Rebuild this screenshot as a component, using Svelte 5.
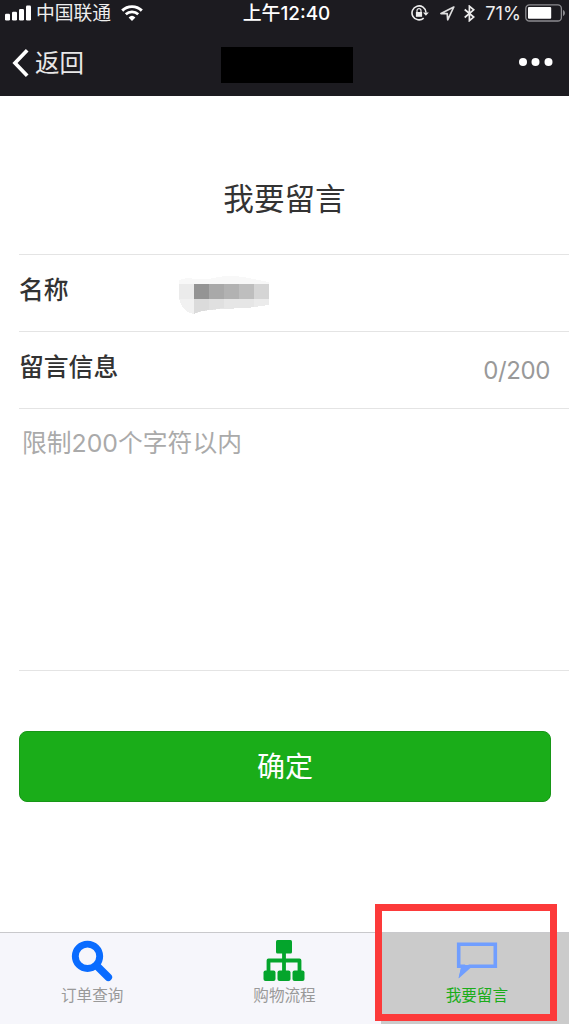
<script lang="ts">
    type Tab = {
        id: string,
        label: string
    }

    const maxLength = 200;

    const tabs: Tab[] = [
        { id: 'search', label: '订单查询' },
        { id: 'flow', label: '购物流程' },
        { id: 'message', label: '我要留言' }
    ];

    let active = $state('message');
    let message = $state('');
</script>

<div class="page">
    <header>
        <div class="status">
            <div class="side">
                <svg class="signal" width="26" height="16" viewBox="0 0 26 16" fill="#fff">
                    <rect x="0" y="8.8" width="5" height="6.7" rx="1.2" />
                    <rect x="7" y="6.8" width="5" height="8.7" rx="1.2" />
                    <rect x="14" y="4" width="5" height="11.5" rx="1.2" />
                    <rect x="21" y="0.5" width="5" height="15" rx="1.2" />
                </svg>
                <span class="carrier">中国联通</span>
                <svg class="wifi" width="22" height="16" viewBox="0 0 22 16" fill="none" stroke="#fff">
                    <path d="M1.2 5.6a14 14 0 0 1 19.6 0" stroke-width="2.9" />
                    <path d="M4.8 9.3a9 9 0 0 1 12.4 0" stroke-width="2.7" />
                    <path d="M11 16l-3.4-3.6a5 5 0 0 1 6.8 0z" fill="#fff" stroke="none" />
                </svg>
            </div>
            <span class="time">上午12:40</span>
            <div class="side right">
                <svg width="18" height="16" viewBox="0 0 18 16" fill="none" stroke="#eee">
                    <path d="M12.7 13.1A7 7 0 1 1 15 7.5" stroke-width="1.6" />
                    <path d="M12 7.4h5.8l-2.9 3.4z" fill="#eee" stroke="none" />
                    <rect x="4.9" y="7" width="6.2" height="4.8" fill="#eee" stroke="none" />
                    <path d="M6 7.2V5.6a2 2 0 0 1 4 0v1.6" stroke-width="1.2" />
                </svg>
                <svg class="arrow" width="15" height="15" viewBox="0 0 15 15" fill="none" stroke="#ddd" stroke-width="1.7" stroke-linejoin="round">
                    <path d="M13.8 1L1 7.6h6.2l.5 6.2z" />
                </svg>
                <svg class="bluetooth" width="11" height="17" viewBox="0 0 11 17" fill="none" stroke="#eee" stroke-width="1.7">
                    <path d="M.7 4.5l9 7.6-4.3 3.6V1.2l4.3 3.6-9 7.7" />
                </svg>
                <span class="percent">71%</span>
                <svg class="battery" width="41" height="18" viewBox="0 0 41 18">
                    <rect x=".8" y=".8" width="35.6" height="16.2" rx="3.6" fill="none" stroke="#8c8c90" stroke-width="1.3" />
                    <rect x="3" y="3" width="23.2" height="11.8" rx="1" fill="#fff" />
                    <path d="M38 6c2.6.7 2.6 5.3 0 6z" fill="#8c8c90" />
                </svg>
            </div>
        </div>
        <div class="nav">
            <button class="back">
                <svg width="17" height="28" viewBox="0 0 17 28" fill="none" stroke="#fff" stroke-width="3.7">
                    <path d="M15.2 1.3L3 14l12.2 12.7" />
                </svg>
                返回
            </button>
            <div class="title-block"></div>
            <svg class="more" width="34" height="8" viewBox="0 0 34 8" fill="#fff">
                <circle cx="4" cy="4" r="4" />
                <circle cx="16.5" cy="4" r="4" />
                <circle cx="29.5" cy="4" r="4" />
            </svg>
        </div>
    </header>

    <main>
        <h1>我要留言</h1>
        <form onsubmit={(event) => event.preventDefault()}>
            <div class="row">
                <span class="label">名称</span>
                <svg class="mosaic" width="90" height="38" viewBox="0 0 90 38" shape-rendering="crispEdges">
                    <path d="M0 8V4q8-3 15-1 15 1 24-2 12-2 25 0l26 5v2z" fill="#f8f8f8" />
                    <path d="M0 23h15v15Q3 36 0 23z" fill="#f1f1f1" />
                    <path d="M15 23h75v6l-21 3-28 1-18 2-8 3z" fill="#e6e6e6" />
                    <path d="M15 23h15v11l-8 1-7 3z" fill="#dbdbdb" />
                    <path d="M30 23h15v9l-15 2z" fill="#e0e0e0" />
                    <path d="M75 23h15v6l-15 2z" fill="#ebebeb" />
                    <rect x="0" y="8" width="15" height="15" fill="#ebebeb" />
                    <rect x="15" y="8" width="15" height="15" fill="#949494" />
                    <rect x="30" y="8" width="15" height="15" fill="#a9a9a9" />
                    <rect x="45" y="8" width="15" height="15" fill="#b2b2b2" />
                    <rect x="60" y="8" width="15" height="15" fill="#bebebe" />
                    <rect x="75" y="8" width="15" height="15" fill="#d5d5d5" />
                </svg>
            </div>
            <div class="row">
                <label class="label" for="message">留言信息</label>
                <span class="count">{message.length}/{maxLength}</span>
            </div>
            <textarea id="message" bind:value={message} maxlength={maxLength} placeholder="限制200个字符以内"></textarea>
            <button class="submit">确定</button>
        </form>
    </main>

    <nav class="tabs">
        {#each tabs as tab (tab.id)}
            <button class="tab" class:active={active === tab.id} onclick={() => (active = tab.id)}>
                {#if tab.id === 'search'}
                    <svg width="42" height="42" viewBox="0 0 42 42" fill="none" stroke="#0a6cff">
                        <circle cx="16.5" cy="16.3" r="12.2" stroke-width="6.9" />
                        <path d="M26 26L37.3 37.3" stroke-width="7.6" stroke-linecap="round" />
                    </svg>
                {:else if tab.id === 'flow'}
                    <svg width="42" height="42" viewBox="0 0 42 42" fill="#04a52c">
                        <rect x="13" y="0" width="16" height="13.5" rx="1.5" />
                        <path d="M5.5 33V20.5H36.5V33M21 12v21" fill="none" stroke="#04a52c" stroke-width="3.8" stroke-linejoin="round" />
                        <rect x=".5" y="30.5" width="12" height="10.5" rx="2" />
                        <rect x="14.5" y="30.5" width="13" height="10.5" rx="2" />
                        <rect x="29.5" y="30.5" width="12" height="10.5" rx="2" />
                    </svg>
                {:else}
                    <svg width="42" height="42" viewBox="0 0 42 42" fill="none" stroke="#709eff" stroke-width="3.6">
                        <path d="M2.7 4.2H39.3V26.3H13.5L5.5 33.5 7 26.3H2.7z" />
                        <path d="M6 25h9L2.5 38z" fill="#709eff" stroke="none" />
                    </svg>
                {/if}
                <span>{tab.label}</span>
            </button>
        {/each}
    </nav>
    <div class="highlight"></div>
</div>

<style>
    :global(body) {
        margin: 0;
        background-color: #fff;
    }

    .page {
        position: relative;
        display: flex;
        flex-direction: column;
        height: 1024px;
        overflow: hidden;
        color: #333;
        font-family: Inter, 'Noto Sans CJK SC', sans-serif;
    }

    button {
        margin: 0;
        padding: 0;
        border: 0;
        background: none;
        color: inherit;
        font-family: inherit;
    }

    svg {
        display: block;
        flex: none;
    }

    header {
        height: 96px;
        background-color: #1c1b20;
        color: #fff;
    }

    .status {
        display: flex;
        align-items: center;
        height: 26px;
        padding: 0 3px 0 5px;
    }

    .side {
        display: flex;
        flex: 1;
        align-items: center;
    }

    .right {
        justify-content: flex-end;
    }

    .signal {
        margin-top: -1px;
    }

    .carrier {
        margin: 1px 10px 0 5px;
        font-size: 18.8px;
        line-height: 26px;
        color: #eee;
    }

    .time {
        padding: 1px 0 0 2px;
        font-size: 18.9px;
        line-height: 26px;
        font-weight: 500;
    }

    .arrow {
        margin-left: 11px;
    }

    .bluetooth {
        margin: 0 10px 0 9px;
    }

    .percent {
        font-size: 18.3px;
        color: #eee;
    }

    .battery {
        margin-left: 4px;
    }

    .nav {
        display: grid;
        grid-template-columns: 209px 132px 1fr;
        align-items: center;
        height: 72px;
        padding: 0 16px 0 12px;
    }

    .back {
        display: flex;
        align-items: center;
        gap: 6px;
        padding-top: 1px;
        font-size: 24.5px;
        line-height: 36px;
        color: #e8e8e8;
    }

    .title-block {
        height: 36px;
        margin-top: 5px;
        background-color: #000;
    }

    .more {
        justify-self: end;
    }

    main {
        flex: 1;
    }

    h1 {
        height: 158px;
        margin: 0;
        box-sizing: border-box;
        padding-top: 80px;
        font-size: 30.6px;
        line-height: 46px;
        font-weight: 400;
        text-align: center;
    }

    form {
        padding-left: 19px;
    }

    .row {
        display: flex;
        height: 76px;
        border-top: 1px solid #e4e4e4;
    }

    .label {
        width: 160px;
        font-size: 24.8px;
        line-height: 70px;
        font-weight: 500;
    }

    .mosaic {
        margin-top: 21px;
    }

    .count {
        margin-left: auto;
        padding-right: 19px;
        font-size: 24px;
        line-height: 78px;
        letter-spacing: -0.4px;
        color: #999;
    }

    textarea {
        display: block;
        width: 100%;
        height: 263px;
        box-sizing: border-box;
        margin: 0;
        padding: 16px 3px;
        border: solid #e4e4e4;
        border-width: 1px 0;
        outline: none;
        resize: none;
        font-family: inherit;
        font-size: 24.8px;
        line-height: 36px;
    }

    textarea::placeholder {
        color: #aaa;
    }

    .submit {
        display: block;
        width: 532px;
        height: 71px;
        margin-top: 60px;
        padding-bottom: 4px;
        border: 1px solid #179617;
        border-radius: 8px;
        background-color: #1aad19;
        color: #fff;
        font-size: 28px;
    }

    .tabs {
        display: grid;
        grid-template-columns: repeat(3, 1fr);
        height: 91px;
        margin: 0 -4px;
        border-top: 1px solid #c9c9cc;
        background-color: #f6f6fb;
    }

    .tab {
        display: flex;
        flex-direction: column;
        align-items: center;
        padding-top: 7px;
        color: #999;
        font-size: 15.6px;
        line-height: 27px;
    }

    .tab.active {
        background-color: #cbcbcb;
        color: #1aad19;
    }

    .highlight {
        position: absolute;
        left: 375px;
        top: 904px;
        width: 182px;
        height: 117px;
        box-sizing: border-box;
        border: 7px solid #fc3a3a;
        pointer-events: none;
    }
</style>
